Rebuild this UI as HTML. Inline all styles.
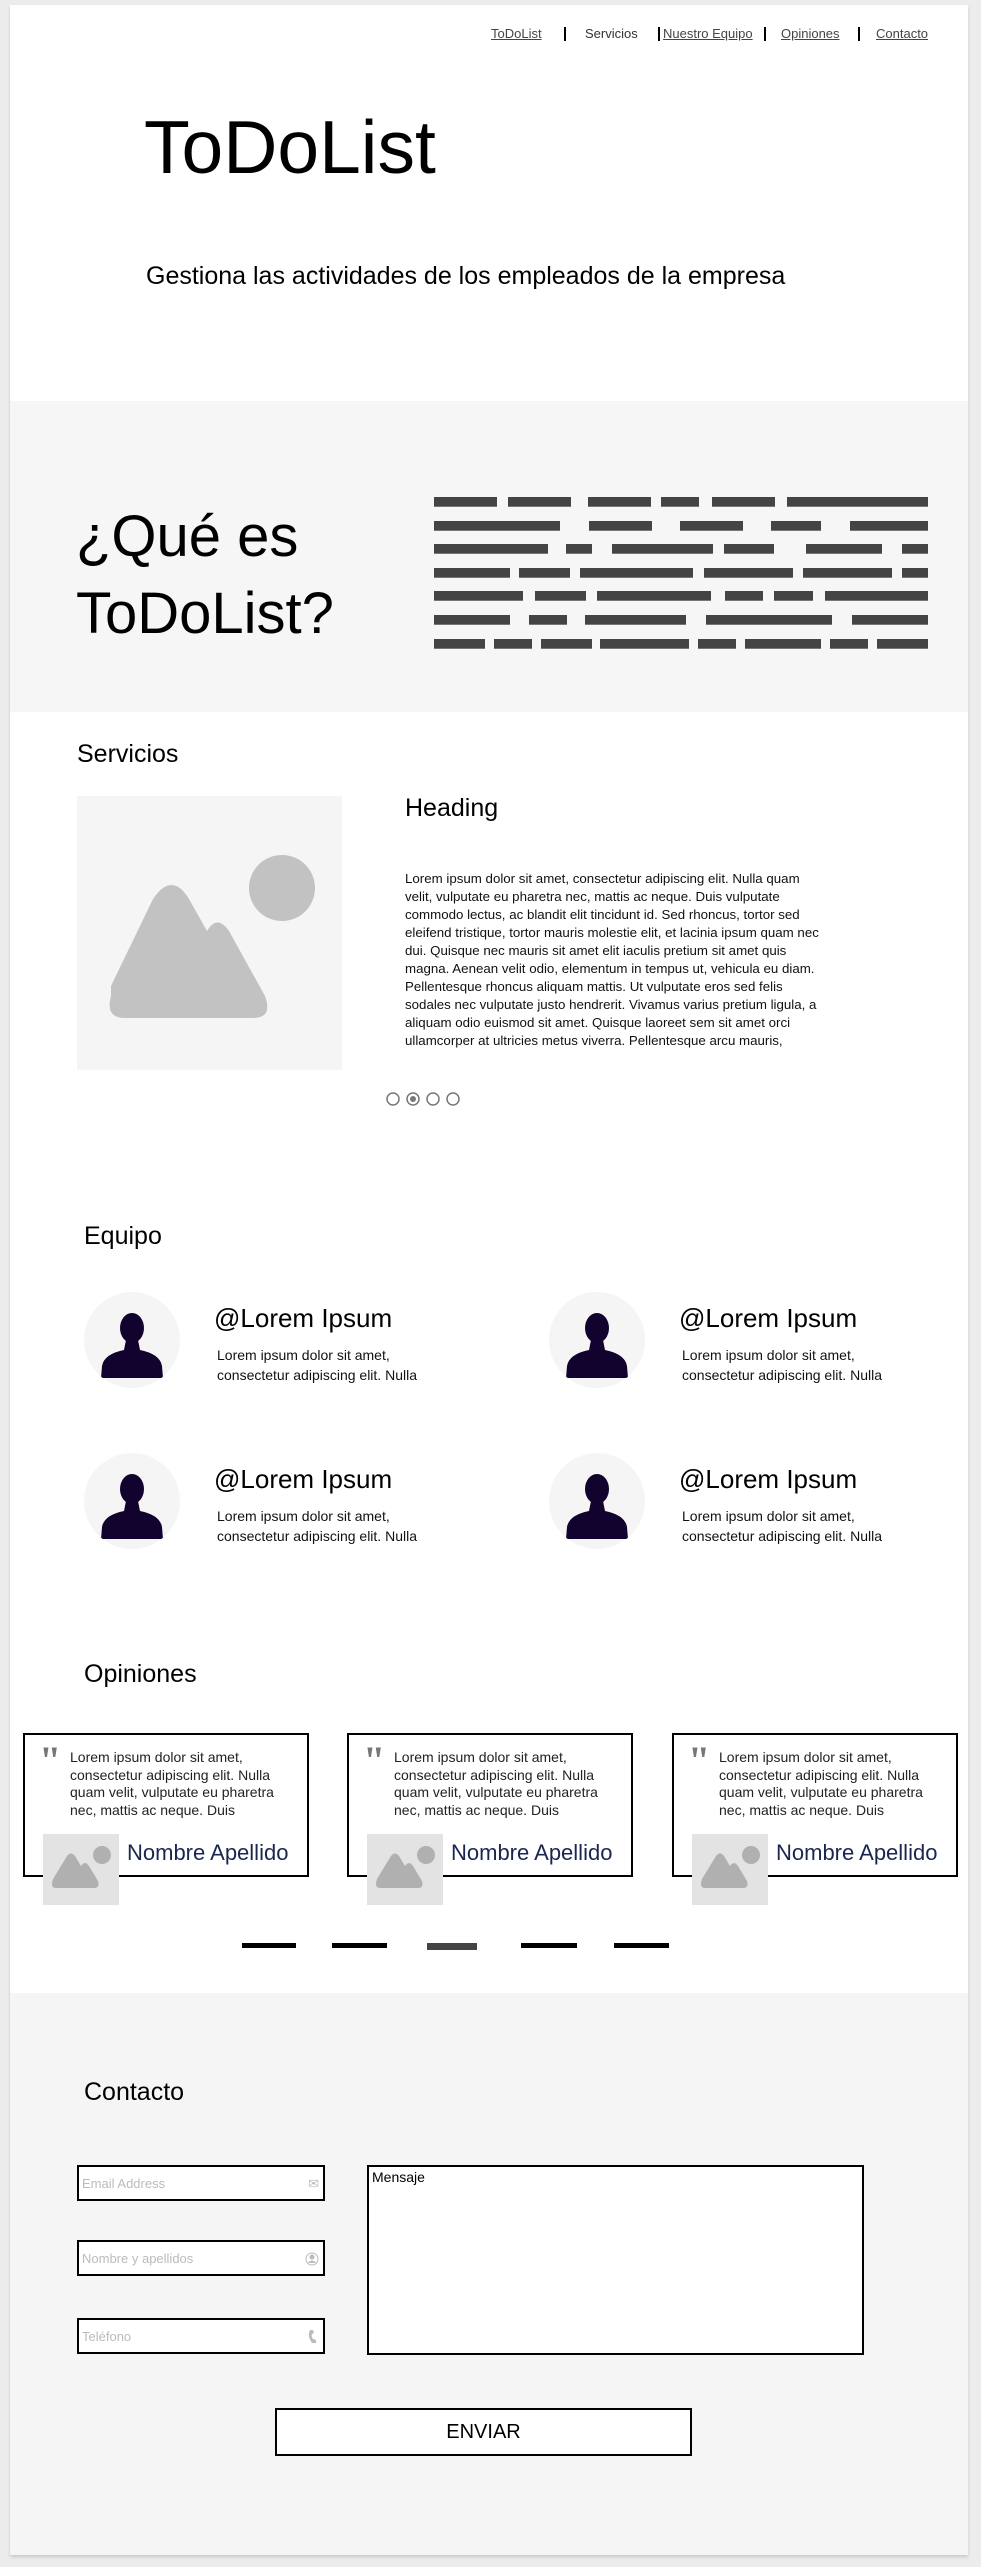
<!DOCTYPE html>
<html><head><meta charset="utf-8">
<style>
*{margin:0;padding:0;box-sizing:border-box}
body{width:981px;height:2567px;background:#ececec;font-family:"Liberation Sans",Arial,sans-serif;position:relative;overflow:hidden;color:#000}
.a{position:absolute}
#page{position:absolute;left:10px;top:5px;width:958px;height:2550px;background:#fff;box-shadow:0 2px 3px rgba(0,0,0,.15)}
.nav{font-size:13px;top:26px;color:#333}
.nav u{color:#444}
.bar{position:absolute;height:10px;background:#444;border-bottom:1px solid #777}
.h2{font-size:25px}
.card{position:absolute;border:2px solid #000;background:#fff;width:286px;height:144px}
.card .q{position:absolute;left:14px;top:6px;font-size:40px;font-weight:bold;color:#777;font-family:"Liberation Serif",serif;line-height:40px}
.card .t{position:absolute;left:45px;top:14px;font-size:14px;line-height:17.5px;color:#222;width:230px}
.card .im{position:absolute;left:18px;top:99px;width:76px;height:71px;background:#e3e3e3}
.card .n{position:absolute;left:102px;top:105px;font-size:22px;color:#1b2650}
.dash{position:absolute;top:1943px;height:5px;background:#000}
.inp{position:absolute;border:2px solid #000;background:#fff;width:248px;height:36px;font-size:13px;color:#bbb;padding:9px 3px}
.name{font-size:26px}
.desc{font-size:14px;line-height:20px;color:#111}
</style></head><body>
<div id="page"></div>
<div class="a nav" style="left:491px"><u>ToDoList</u></div>
<div class="a" style="left:564px;top:27px;width:2px;height:14px;background:#000"></div>
<div class="a nav" style="left:585px">Servicios</div>
<div class="a" style="left:658px;top:27px;width:2px;height:14px;background:#000"></div>
<div class="a nav" style="left:663px"><u>Nuestro Equipo</u></div>
<div class="a" style="left:764px;top:27px;width:2px;height:14px;background:#000"></div>
<div class="a nav" style="left:781px"><u>Opiniones</u></div>
<div class="a" style="left:858px;top:27px;width:2px;height:14px;background:#000"></div>
<div class="a nav" style="left:876px"><u>Contacto</u></div>

<div class="a" style="left:144px;top:104px;font-size:75px">ToDoList</div>
<div class="a" style="left:146px;top:262px;font-size:25px">Gestiona las actividades de los empleados de la empresa</div>

<div class="a" style="left:10px;top:401px;width:958px;height:311px;background:#f6f6f6"></div>
<div class="a" style="left:76px;top:498px;font-size:58px;line-height:77px">¿Qué es<br>ToDoList?</div>
<div id="bars"></div>

<div class="a h2" style="left:77px;top:740px">Servicios</div>
<div class="a" style="left:77px;top:796px;width:265px;height:274px;background:#f5f5f5">
<svg width="265" height="274" viewBox="0 0 265 274"><circle cx="205" cy="92" r="33" fill="#c2c2c2"/><path d="M34 190 L76 103 Q95 75 112 103 L130 135 Q140 118 152 135 L188 200 Q196 222 176 222 L48 222 Q28 222 34 200 Z" fill="#c2c2c2"/></svg></div>
<div class="a h2" style="left:405px;top:794px">Heading</div>
<div class="a" style="left:405px;top:870px;white-space:nowrap;font-size:13.3px;line-height:18px;color:#111">Lorem ipsum dolor sit amet, consectetur adipiscing elit. Nulla quam<br>velit, vulputate eu pharetra nec, mattis ac neque. Duis vulputate<br>commodo lectus, ac blandit elit tincidunt id. Sed rhoncus, tortor sed<br>eleifend tristique, tortor mauris molestie elit, et lacinia ipsum quam nec<br>dui. Quisque nec mauris sit amet elit iaculis pretium sit amet quis<br>magna. Aenean velit odio, elementum in tempus ut, vehicula eu diam.<br>Pellentesque rhoncus aliquam mattis. Ut vulputate eros sed felis<br>sodales nec vulputate justo hendrerit. Vivamus varius pretium ligula, a<br>aliquam odio euismod sit amet. Quisque laoreet sem sit amet orci<br>ullamcorper at ultricies metus viverra. Pellentesque arcu mauris,</div>
<svg class="a" style="left:384px;top:1090px" width="80" height="18"><g fill="none" stroke="#777" stroke-width="1.5"><circle cx="9" cy="9" r="6"/><circle cx="29" cy="9" r="6"/><circle cx="49" cy="9" r="6"/><circle cx="69" cy="9" r="6"/></g><circle cx="29" cy="9" r="3" fill="#777"/></svg>

<div class="a h2" style="left:84px;top:1222px">Equipo</div>
<div id="team"></div>

<div class="a h2" style="left:84px;top:1660px">Opiniones</div>
<div id="cards"></div>
<div class="dash" style="left:242px;width:54px"></div>
<div class="dash" style="left:332px;width:55px"></div>
<div class="dash" style="left:427px;width:50px;background:#444;height:7px"></div>
<div class="dash" style="left:521px;width:56px"></div>
<div class="dash" style="left:614px;width:55px"></div>

<div class="a" style="left:10px;top:1993px;width:958px;height:562px;background:#f5f5f5"></div>
<div class="a h2" style="left:84px;top:2078px">Contacto</div>
<div class="inp" style="left:77px;top:2165px">Email Address<span class="a" style="right:4px;top:9px;color:#bbb">✉</span></div>
<div class="inp" style="left:77px;top:2240px">Nombre y apellidos<svg class="a" style="right:4px;top:10px" width="14" height="14"><circle cx="7" cy="7" r="6" fill="none" stroke="#bbb"/><circle cx="7" cy="5" r="2.5" fill="#bbb"/><path d="M3 11 Q7 6 11 11" fill="#bbb"/></svg></div>
<div class="inp" style="left:77px;top:2318px">Teléfono<svg class="a" style="right:4px;top:9px" width="12" height="16"><path d="M3 1 Q0 7 5 14 L9 14 L9 11 L6 10 Q4 7 5 5 L7 4 L6 1 Z" fill="#bbb"/></svg></div>
<div class="a" style="left:367px;top:2165px;width:497px;height:190px;border:2px solid #000;background:#fff;font-size:14px;padding:2px 3px">Mensaje</div>
<div class="a" style="left:275px;top:2408px;width:417px;height:48px;border:2px solid #000;background:#fff;font-size:20px;text-align:center;line-height:44px">ENVIAR</div>

<script>
var rows=[[0,63,74,63,154,63,227,38,278,63,353,141],[0,126,155,63,246,63,337,50,416,78],[0,114,132,26,178,101,290,50,372,76,468,26],[0,76,85,51,146,113,270,89,369,89,468,26],[0,89,101,51,163,114,291,38,340,39,391,103],[0,76,95,38,151,101,272,126,418,76],[0,51,60,38,107,51,166,89,264,38,311,76,396,38,443,51]];
var h='';rows.forEach(function(r,i){for(var j=0;j<r.length;j+=2){h+='<div class="bar" style="left:'+(434+r[j])+'px;top:'+(497+i*23.6)+'px;width:'+r[j+1]+'px"></div>';}});
document.getElementById('bars').innerHTML=h;
var t='';[[84,1292],[549,1292],[84,1453],[549,1453]].forEach(function(p){
t+='<div class="a" style="left:'+p[0]+'px;top:'+p[1]+'px;width:96px;height:96px;border-radius:50%;background:#f5f5f5;overflow:hidden"><svg width="96" height="96" viewBox="0 0 96 96"><ellipse cx="48" cy="36" rx="12" ry="15" fill="#12032e"/><path d="M42 48 L54 48 L56 58 Q76 62 78 74 L79 86 L17 86 L18 74 Q20 62 40 58 Z" fill="#12032e"/></svg></div>';
t+='<div class="a name" style="left:'+(p[0]+130)+'px;top:'+(p[1]+11)+'px">@Lorem Ipsum</div>';
t+='<div class="a desc" style="left:'+(p[0]+133)+'px;top:'+(p[1]+53)+'px">Lorem ipsum dolor sit amet,<br>consectetur adipiscing elit. Nulla</div>';});
document.getElementById('team').innerHTML=t;
var c='';[23,347,672].forEach(function(x){c+='<div class="card" style="left:'+x+'px;top:1733px"><div class="q">"</div><div class="t">Lorem ipsum dolor sit amet, consectetur adipiscing elit. Nulla quam velit, vulputate eu pharetra nec, mattis ac neque. Duis</div><div class="im"><svg width="76" height="71"><circle cx="59" cy="21" r="9" fill="#b0b0b0"/><path d="M10 45 L24 22 Q28 17 32 22 L38 32 Q42 26 46 32 L55 47 Q57 54 51 54 L13 54 Q7 54 10 45Z" fill="#b0b0b0"/></svg></div><div class="n">Nombre Apellido</div></div>';});
document.getElementById('cards').innerHTML=c;
</script>
</body></html>
